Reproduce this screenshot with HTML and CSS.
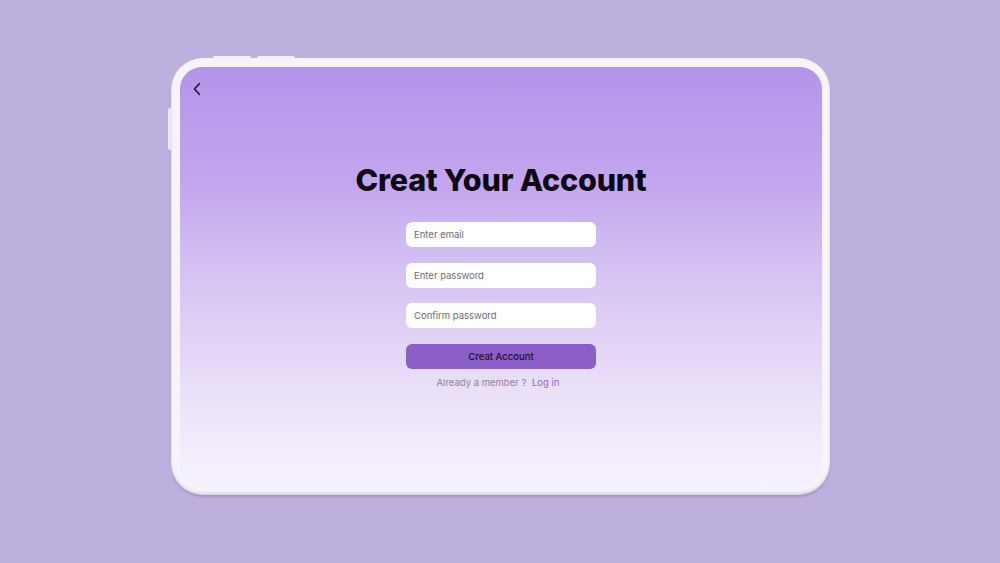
FILE: index.html
```html
<!DOCTYPE html>
<html>
<head>
<meta charset="utf-8">
<link rel="stylesheet" href="styles.css">
</head>
<body>
<div class="stage">
  <div class="device">
    <span class="btn-top btn-top-a"></span>
    <span class="btn-top btn-top-b"></span>
    <span class="btn-side"></span>
    <div class="screen">
      <div class="back">
        <svg width="10" height="14" viewBox="0 0 10 14"><path d="M7.5 1.5 L2.5 7 L7.5 12.5" fill="none" stroke="#1c1430" stroke-width="1.6" stroke-linecap="round" stroke-linejoin="round"/></svg>
      </div>
      <h1 class="title">Creat Your Account</h1>
      <form class="form">
        <div class="field">Enter email</div>
        <div class="field">Enter password</div>
        <div class="field">Confirm password</div>
        <div class="submit">Creat Account</div>
        <p class="member">Already a member ? <span class="login">Log in</span></p>
      </form>
    </div>
  </div>
</div>
</body>
</html>
```

FILE: styles.css
```css
* { box-sizing: border-box; }
html, body { margin: 0; padding: 0; }
body {
  width: 1000px;
  height: 563px;
  background: #bdafde;
  font-family: "Inter", "Noto Sans", sans-serif;
  overflow: hidden;
}
.stage {
  display: flex;
  justify-content: center;
  padding-top: 58px;
}
.device {
  position: relative;
  width: 659px;
  height: 437px;
  margin-left: 1px;
  background: #f6f4f9;
  border-radius: 32px;
  padding: 9px 8px 7px 9px;
  box-shadow: 0 2px 2px rgba(120, 100, 160, 0.35), inset 0 -2px 3px rgba(160, 150, 180, 0.35);
}
.btn-top {
  position: absolute;
  top: -2px;
  height: 3px;
  background: #f1eef6;
  border-radius: 2px 2px 0 0;
}
.btn-top-a { left: 42px; width: 38px; }
.btn-top-b { left: 86px; width: 38px; }
.btn-side {
  position: absolute;
  left: -3px;
  top: 50px;
  width: 3px;
  height: 42px;
  background: #ece8f3;
  border-radius: 2px 0 0 2px;
}
.screen {
  height: 100%;
  border-radius: 22px;
  background: linear-gradient(180deg, #b394ea 0%, #c3a6ee 28%, #d2bef2 45%, #e2d4f6 65%, #ede5f9 82%, #f6f2fc 100%);
  display: flex;
  flex-direction: column;
  align-items: center;
  padding-top: 15px;
}
.back {
  align-self: flex-start;
  margin-left: 12px;
  height: 14px;
}
.back svg { display: block; }
.title {
  margin: 66px 0 0 0;
  font-size: 30.5px;
  font-weight: 800;
  color: #0d0614;
  letter-spacing: -0.2px;
  line-height: 36px;
}
.form {
  margin: 24px 0 0 0;
  display: flex;
  flex-direction: column;
  align-items: center;
  gap: 15.5px;
}
.field {
  width: 190px;
  height: 25px;
  background: #ffffff;
  border-radius: 6px;
  padding-left: 8px;
  display: flex;
  align-items: center;
  font-size: 9.5px;
  color: #6f6a78;
}
.submit {
  width: 190px;
  height: 25px;
  background: #8a5dc7;
  border-radius: 6px;
  display: flex;
  align-items: center;
  justify-content: center;
  font-size: 9.5px;
  font-weight: 500;
  color: #1a1026;
}
.member {
  margin: -7px 0 0 -6px;
  font-size: 9.5px;
  color: #8c8497;
}
.login {
  color: #8a68cf;
  margin-left: 3px;
}
```
